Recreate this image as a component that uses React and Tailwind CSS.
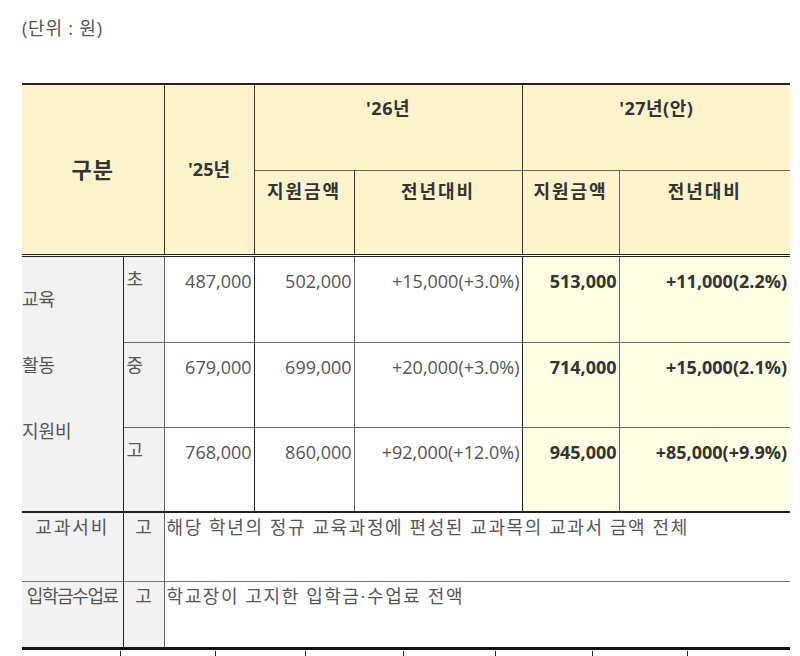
import React from "react"

const font = "font-['Open_Sans','Noto_Sans_CJK_KR',sans-serif]"

const rows = [
  { grade: "초", y25: "487,000", y26: "502,000", d26: "+15,000(+3.0%)", y27: "513,000", d27: "+11,000(2.2%)" },
  { grade: "중", y25: "679,000", y26: "699,000", d26: "+20,000(+3.0%)", y27: "714,000", d27: "+15,000(2.1%)" },
  { grade: "고", y25: "768,000", y26: "860,000", d26: "+92,000(+12.0%)", y27: "945,000", d27: "+85,000(+9.9%)" },
]

const ticks = [98, 95, 90, 98, 92, 97, 95, 98]

export default function App() {
  return (
    <div className={`${font} w-[800px] h-[656px] overflow-hidden bg-white text-[#555]`}>
      <div className="pl-[22px] pt-[16px] text-[18px] leading-[24px] tracking-[0.8px]">(단위 : 원)</div>

      <table className="table-fixed border-collapse w-[768px] ml-[22px] mt-[43px] text-[18px] leading-[24px]">
        <colgroup>
          <col className="w-[101px]" />
          <col className="w-[41px]" />
          <col className="w-[90px]" />
          <col className="w-[100px]" />
          <col className="w-[168px]" />
          <col className="w-[97px]" />
          <col className="w-[171px]" />
        </colgroup>
        <thead className="bg-[#fdf4cd] text-[#333] font-bold">
          <tr className="h-[86px] border-t-2 border-[#222]">
            <th colSpan={2} rowSpan={2} className="text-[22px] tracking-[1px] border-r border-[#333] border-b-[3px] border-b-[#222] border-double">
              구분
            </th>
            <th rowSpan={2} className="border-r border-[#333] border-b-[3px] border-b-[#222] border-double">
              '25년
            </th>
            <th colSpan={2} className="align-top pt-[11px] tracking-[0.5px] border-r border-[#333] border-b border-b-[#666]">
              '26년
            </th>
            <th colSpan={2} className="align-top pt-[11px] tracking-[0.5px] border-b border-b-[#666]">
              '27년(안)
            </th>
          </tr>
          <tr className="h-[85px]">
            <th className="align-top pt-[8px] tracking-[2px] border-r border-[#333] border-b-[3px] border-b-[#222] border-double">지원금액</th>
            <th className="align-top pt-[8px] tracking-[2px] border-r border-[#333] border-b-[3px] border-b-[#222] border-double">전년대비</th>
            <th className="align-top pt-[8px] tracking-[2px] border-r border-[#666] border-b-[3px] border-b-[#222] border-double">지원금액</th>
            <th className="align-top pt-[8px] tracking-[2px] border-b-[3px] border-b-[#222] border-double">전년대비</th>
          </tr>
        </thead>
        <tbody>
          {rows.map((r, i) => (
            <tr
              key={r.grade}
              className={`${i === 0 ? "h-[87px]" : "h-[85px]"} ${i === 2 ? "border-b-2 border-b-[#222]" : "border-b border-b-[#666]"}`}
            >
              {i === 0 && (
                <td rowSpan={3} className="bg-[#f2f2f2] align-top pt-[30px] border-r border-[#222]">
                  <div className="flex flex-col gap-[42px]">
                    <span>교육</span>
                    <span>활동</span>
                    <span>지원비</span>
                  </div>
                </td>
              )}
              <td className="bg-[#f2f2f2] align-top pt-[10px] pl-[3px] border-r border-[#666]">{r.grade}</td>
              <td className="align-top pt-[12px] pr-[2px] text-right border-r border-[#222]">{r.y25}</td>
              <td className="align-top pt-[12px] pr-[2px] text-right border-r border-[#666]">{r.y26}</td>
              <td className="align-top pt-[12px] pr-[2px] text-right border-r border-[#222]">{r.d26}</td>
              <td className="bg-[#fffde3] align-top pt-[12px] pr-[2px] text-right font-bold text-[#333] border-r border-[#666]">{r.y27}</td>
              <td className="bg-[#fffde3] align-top pt-[12px] pr-[3px] text-right font-bold text-[#333]">{r.d27}</td>
            </tr>
          ))}
          <tr className="h-[69px] border-b border-b-[#777]">
            <td className="bg-[#f2f2f2] align-top pt-[2px] text-center tracking-[2px] border-r border-[#222]">교과서비</td>
            <td className="bg-[#f2f2f2] align-top pt-[2px] text-center border-r border-[#666]">고</td>
            <td colSpan={5} className="align-top pt-[2px] pl-[2px] tracking-[1.6px] whitespace-nowrap">
              해당 학년의 정규 교육과정에 편성된 교과목의 교과서 금액 전체
            </td>
          </tr>
          <tr className="h-[67px] border-b-[3px] border-b-[#111]">
            <td className="bg-[#f2f2f2] align-top pt-[2px] text-center tracking-[-1.4px] border-r border-[#222] whitespace-nowrap">입학금수업료</td>
            <td className="bg-[#f2f2f2] align-top pt-[2px] text-center border-r border-[#666]">고</td>
            <td colSpan={5} className="align-top pt-[2px] pl-[2px] tracking-[1.6px] whitespace-nowrap">
              학교장이 고지한 입학금·수업료 전액
            </td>
          </tr>
        </tbody>
      </table>

      <div className="flex ml-[22px] mt-[1px] h-[10px]">
        {ticks.map((w, i) => (
          <div key={i} style={{ width: w }} className={i === 0 ? "" : "border-l border-[#222]"} />
        ))}
      </div>
    </div>
  )
}
